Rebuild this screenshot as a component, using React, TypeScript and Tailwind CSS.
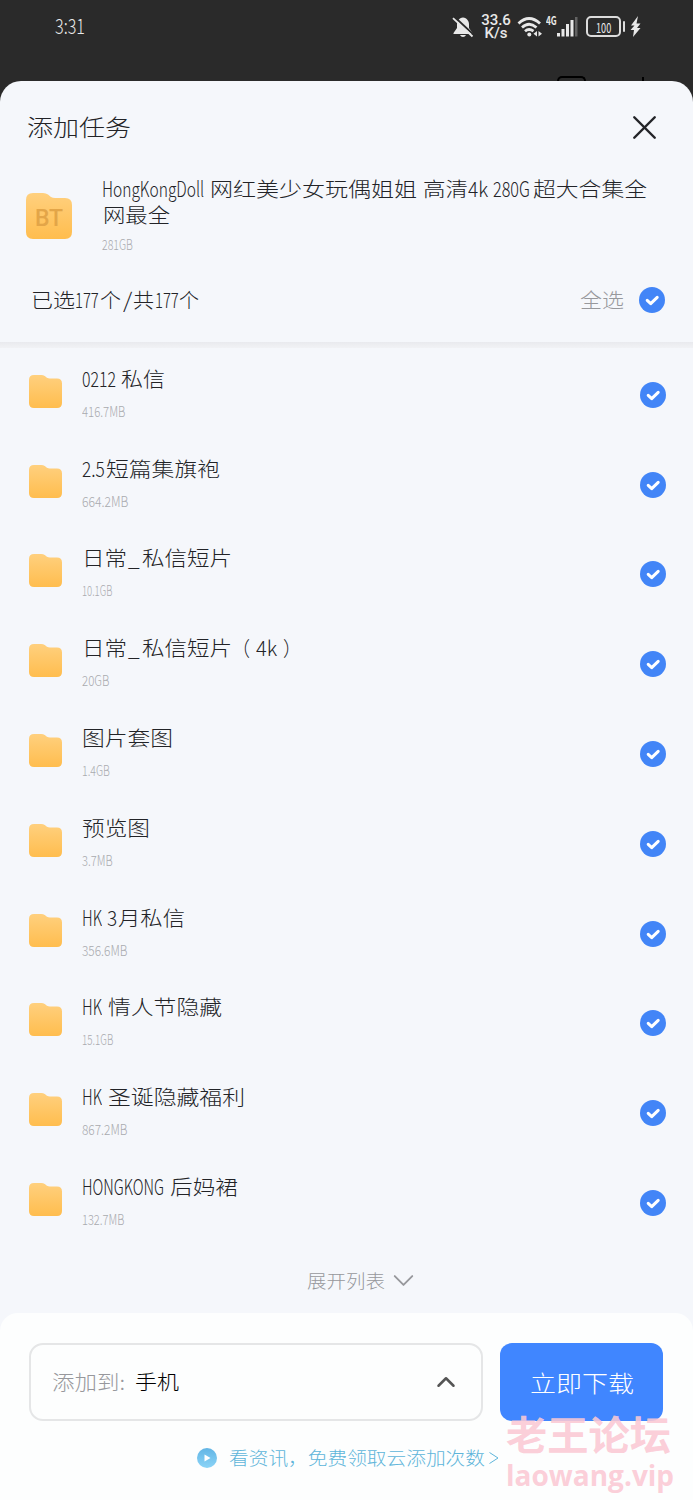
import { useLayoutEffect, useRef, useState } from "react";
import { ChevronDown, ChevronUp, X } from "lucide-react";

// text, width, gap before it
type Run = [string, number, number];

const files: { runs: Run[]; size: string; sizeWidth: number }[] = [
  { runs: [["0212", 34, 0], ["私信", 44, 5]], size: "416.7MB", sizeWidth: 43 },
  { runs: [["2.5", 23, 0], ["短篇集旗袍", 114, 1]], size: "664.2MB", sizeWidth: 46 },
  { runs: [["日常", 45, 0], ["_", 12, 1], ["私信短片", 90, 2]], size: "10.1GB", sizeWidth: 30 },
  {
    runs: [["日常", 45, 0], ["_", 12, 1], ["私信短片", 90, 2], ["（", 18, 0], ["4k", 21, 6], ["）", 18, 6]],
    size: "20GB",
    sizeWidth: 27,
  },
  { runs: [["图片套图", 91, 0]], size: "1.4GB", sizeWidth: 28 },
  { runs: [["预览图", 68, 0]], size: "3.7MB", sizeWidth: 31 },
  { runs: [["HK", 20, 0], ["3", 10, 5], ["月私信", 67, 1]], size: "356.6MB", sizeWidth: 45 },
  { runs: [["HK", 20, 0], ["情人节隐藏", 114, 6]], size: "15.1GB", sizeWidth: 31 },
  { runs: [["HK", 20, 0], ["圣诞隐藏福利", 137, 6]], size: "867.2MB", sizeWidth: 45 },
  { runs: [["HONGKONG", 82, 0], ["后妈裙", 68, 6]], size: "132.7MB", sizeWidth: 42 },
];

const title: Run[] = [
  ["HongKongDoll", 102, 0],
  ["网红美少女玩偶姐姐", 207, 6],
  ["高清", 45, 6],
  ["4k", 20, 0],
  ["280G", 37, 5],
  ["超大合集全", 114, 3],
];

const count: Run[] = [
  ["已选", 44, 0],
  ["177", 24, 0],
  ["个", 21, 1],
  ["/", 9, 2],
  ["共", 21, 1],
  ["177", 24, 1],
  ["个", 20, 0],
];

// Squeezes or stretches one line of text to a fixed width
function Fit({ text, width, className = "" }: { text: string; width: number; className?: string }) {
  const ref = useRef<HTMLSpanElement>(null);
  const [scale, setScale] = useState(1);

  useLayoutEffect(() => {
    if (ref.current) setScale(width / ref.current.offsetWidth);
  }, [text, width]);

  return (
    <span className={`block whitespace-pre ${className}`} style={{ width }}>
      <span ref={ref} className="inline-block origin-left" style={{ transform: `scaleX(${scale})` }}>
        {text}
      </span>
    </span>
  );
}

function Line({ runs, className = "" }: { runs: Run[]; className?: string }) {
  return (
    <div className={`flex ${className}`}>
      {runs.map(([text, width, gap], i) => (
        <div key={i} className="shrink-0" style={{ marginLeft: gap }}>
          <Fit text={text} width={width} className={/^[\w./]+$/.test(text) ? "-mt-px text-[21px]" : "text-[20px]"} />
        </div>
      ))}
    </div>
  );
}

function Folder({ className, bt = false }: { className: string; bt?: boolean }) {
  return (
    <div className={`relative shrink-0 ${className}`}>
      <svg viewBox="0 0 46 46" className="h-full w-full">
        <defs>
          <linearGradient id="folder" x1="0" y1="0" x2="0" y2="1">
            <stop offset="0" stopColor="#ffd07e" />
            <stop offset="1" stopColor="#ffbd4e" />
          </linearGradient>
        </defs>
        <path
          d="M0 7Q0 0 7 0H17Q20 0 22 1.5L25 4Q27 5.2 30 5H39Q46 5 46 12V39Q46 46 39 46H7Q0 46 0 39Z"
          fill="url(#folder)"
        />
      </svg>
      {bt && (
        <span className="absolute inset-x-0 top-[14px] text-center font-['Roboto'] text-[23px] leading-[24px] font-medium text-[#e3a548]">
          BT
        </span>
      )}
    </div>
  );
}

function Check() {
  return (
    <svg viewBox="0 0 26 26" className="size-[26px] shrink-0">
      <circle cx="13" cy="13" r="13" fill="#4285f7" />
      <path
        d="M8.2 13.4L11.7 16.7L18.2 10.4"
        fill="none"
        stroke="#fff"
        strokeWidth="3"
        strokeLinecap="round"
        strokeLinejoin="round"
      />
    </svg>
  );
}

function StatusBar() {
  return (
    <div className="flex h-[53px] items-center pr-[52px] pl-[55px] text-[#e8e8e8]">
      <Fit text="3:31" width={30} className="mr-auto pb-[2px] text-[21px]" />

      <svg viewBox="0 0 22 22" className="size-[22px]" fill="currentColor">
        <path d="M11 1.5C7 2 5 5 5 8.500V12L1.500 17V18H20.500V17L17 12V8.500C17 5 15 2 11 1.500Z" />
        <path d="M8 19H14Q13 21 11 21T8 19Z" />
        <path d="M2 0.500L22 19" stroke="#2a2a2a" strokeWidth="2" />
        <path d="M1 2.200L20.500 20.500" stroke="currentColor" strokeWidth="1.800" />
      </svg>

      <div className="ml-[6px] w-[32px] text-center font-['Roboto'] text-[15px] leading-[13px] font-medium">
        33.6
        <br />
        K/s
      </div>

      <svg viewBox="0 0 26 22" className="ml-[5px] h-[22px] w-[26px]" fill="none" stroke="currentColor" strokeWidth="2.800">
        <path d="M1.500 7.500Q12 -2.500 23 7.500" />
        <path d="M5 11.500Q12 5 19.500 11.500" />
        <path d="M8 15.200Q12 11.800 16.500 15.200" />
        <circle cx="12.300" cy="18.500" r="2" fill="currentColor" stroke="none" />
        <path d="M20 15L16.500 17.800L20 20.500ZM21.500 15L25 17.800L21.500 20.500Z" fill="currentColor" stroke="none" />
      </svg>

      <Fit text="4G" width={11} className="ml-[3px] self-start pt-[13px] text-[12px] leading-[14px] font-bold" />
      <svg viewBox="0 0 21 20" className="h-[20px] w-[21px]" fill="currentColor">
        <rect x="0" y="16" width="3" height="3.500" />
        <rect x="4.500" y="12" width="3" height="7.500" />
        <rect x="9" y="7" width="3" height="12.500" />
        <rect x="13.500" y="3" width="3" height="16.500" />
        <rect x="18" y="0" width="2.500" height="19.500" opacity="0.3" />
      </svg>

      <div className="ml-[8px] flex h-[21px] w-[35px] items-center justify-center rounded-[5px] border-2 border-[#dcdcdc]">
        <Fit text="100" width={15} className="text-[14px] leading-[16px] font-normal" />
      </div>
      <div className="ml-[2px] h-[11px] w-[2px] rounded bg-[#dcdcdc]" />
      <svg viewBox="0 0 11 22" className="ml-[5px] h-[22px] w-[11px]" fill="currentColor">
        <path d="M8 0L1 9.500H4.500L0.500 14H4L3 21L10.500 12H7L10.500 7.500H6.500Z" />
      </svg>
    </div>
  );
}

export default function App() {
  return (
    <div className="relative flex h-[1500px] w-[693px] flex-col overflow-hidden bg-[#2a2a2a] font-['Noto_Sans_CJK_SC',sans-serif] font-light text-[#222327]">
      <StatusBar />

      {/* Toolbar icons of the dimmed page, mostly under the sheet */}
      <div className="flex h-[28px] items-end justify-end overflow-hidden pr-[49px]">
        <div className="mr-[56px] h-[5px] w-[29px] rounded-t-[6px] border-2 border-b-0 border-black" />
        <div className="h-[4px] w-[2px] bg-black" />
      </div>

      <div className="flex flex-1 flex-col rounded-t-[21px] bg-[#f5f7fb]">
        <div className="flex h-[92px] items-center justify-between pr-[27px] pl-[27px]">
          <Fit text="添加任务" width={104} className="pb-[2px] text-[23px]" />
          <X className="size-[41px] mr-px" strokeWidth={1.4} />
        </div>

        <div className="flex h-[82px] pl-[26px]">
          <Folder className="mt-[20px] size-[46px]" bt />
          <div className="ml-[30px] leading-[26px]">
            <Line runs={title} className="mt-[3px] h-[26px]" />
            <Fit text="网最全" width={67} className="ml-[1px] text-[20px]" />
            <Fit text="281GB" width={31} className="mt-[3px] text-[14px] text-[#a9aaae]" />
          </div>
        </div>

        <div className="flex h-[87px] items-center pt-[2px] pr-[28px] pl-[31px]">
          <Line runs={count} className="mr-auto leading-[30px]" />
          <Fit text="全选" width={44} className="mr-[15px] text-[20px] text-[#97989c]" />
          <Check />
        </div>

        <div className="h-[6px] bg-linear-to-b from-[#e9eaee] to-[#f1f2f5]" />

        <ul className="mt-[2px]">
          {files.map((file) => (
            <li key={file.size} className="flex h-[89.8px] items-center pr-[27px] pl-[29px]">
              <Folder className="mb-[7px] size-[33px]" />
              <div className="mb-[4px] ml-[20px] flex-1">
                <Line runs={file.runs} className="h-[30px] leading-[30px]" />
                <Fit
                  text={file.size}
                  width={file.sizeWidth}
                  className="mt-[7px] mb-px text-[14px] leading-[20px] text-[#a9aaae]"
                />
              </div>
              <Check />
            </li>
          ))}
        </ul>

        <div className="flex h-[65px] items-center justify-center gap-[1px] pl-[34px] text-[#97989c]">
          <Fit text="展开列表" width={78} className="text-[18px]" />
          <ChevronDown className="size-[35px]" strokeWidth={1.3} />
        </div>

        <div className="flex-1 rounded-t-[18px] bg-[#fdfefe] px-[29px] pt-[30px]">
          <div className="flex gap-[17px]">
            <div className="flex h-[78px] w-[454px] items-center rounded-[14px] border-2 border-[#e5e6e7] pr-[20px] pl-[21px] text-[20px]">
              <Fit text="添加到:" width={73} className="text-[#97989c]" />
              <Fit text="手机" width={44} className="ml-[10px] text-black" />
              <ChevronUp className="ml-auto size-[30px] text-[#555]" strokeWidth={2} />
            </div>
            <div className="flex h-[78px] w-[163px] items-center justify-center rounded-[12px] bg-[#4086ff] text-white">
              <Fit text="立即下载" width={104} className="text-[23px]" />
            </div>
          </div>

          <div className="mt-[22px] flex h-[30px] items-center pl-[168px] text-[#5eb5da]">
            <svg viewBox="0 0 20 20" className="size-[20px]">
              <defs>
                <linearGradient id="play" x1="0" y1="0" x2="0" y2="1">
                  <stop offset="0" stopColor="#62b5e5" />
                  <stop offset="1" stopColor="#8bd4f7" />
                </linearGradient>
              </defs>
              <circle cx="10" cy="10" r="10" fill="url(#play)" />
              <path d="M7.500 6.500L13.500 10L7.500 13.500Z" fill="#fff" />
            </svg>
            <Fit text="看资讯，免费领取云添加次数" width={256} className="ml-[12px] text-[18px]" />
            <svg viewBox="0 0 10 12" className="ml-[4px] h-[12px] w-[10px]" fill="none" stroke="currentColor">
              <path d="M0.500 0.500L9 6L0.500 11.500" />
            </svg>
          </div>
        </div>
      </div>

      {/* Watermark */}
      <div className="absolute top-[1407px] left-[506px] font-bold text-[#fbc9d4]/90">
        <Fit text="老王论坛" width={165} className="text-[40px] leading-[52px]" />
        <Fit text="laowang.vip" width={168} className="font-['Open_Sans',sans-serif] text-[29px] leading-[32px]" />
      </div>
    </div>
  );
}
